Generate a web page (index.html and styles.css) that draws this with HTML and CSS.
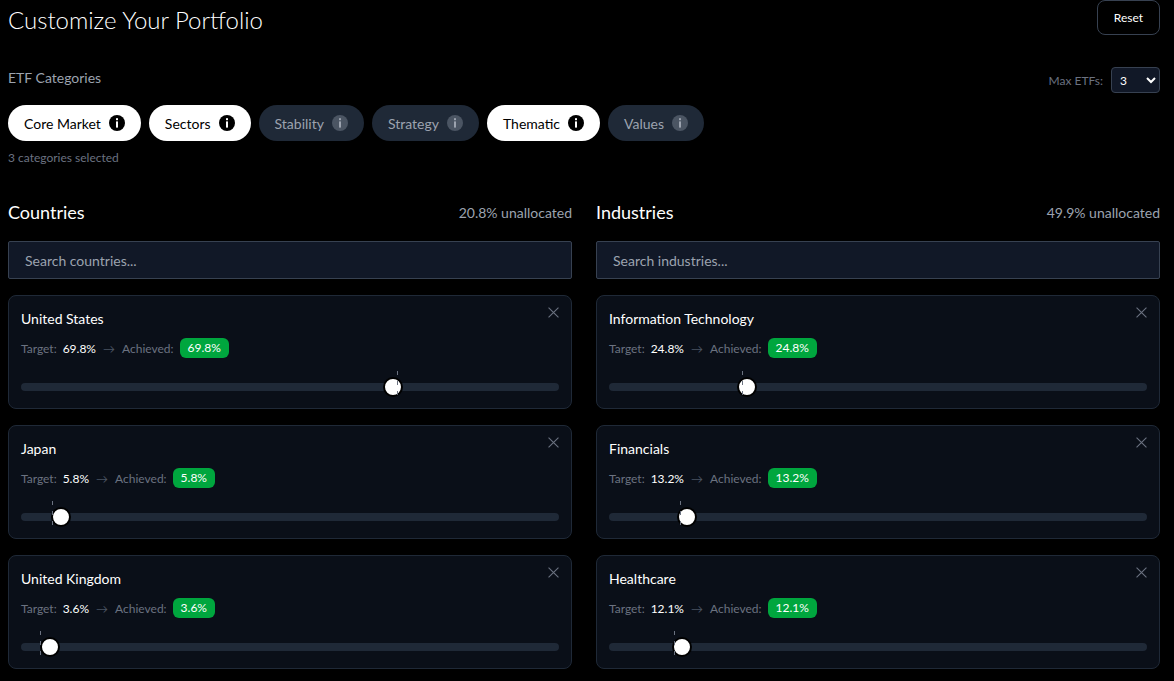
FILE: index.html
```html
<!DOCTYPE html>
<html lang="en">

<head>
    <title>Customize Your Portfolio</title>
    <link rel="stylesheet" href="styles.css">
</head>

<body>

    <div class="page">
        <!-- Header -->
        <div class="page-header">
            <h1>Customize Your Portfolio</h1>
            <button class="btn-reset">Reset</button>
        </div>

        <!-- Categories -->
        <div class="categories-top">
            <span class="section-label">ETF Categories</span>
            <div class="max-etfs">
                <label for="maxEtfs">Max ETFs:</label>
                <select id="maxEtfs">
                    <option>1</option>
                    <option>2</option>
                    <option selected>3</option>
                    <option>4</option>
                    <option>5</option>
                </select>
            </div>
        </div>

        <div class="pills">
            <button class="pill active">Core Market <svg class="info" viewBox="0 0 16 16"><circle cx="8" cy="8" r="8"/><rect class="info-mark" x="7" y="3.2" width="2" height="2"/><rect class="info-mark" x="7" y="6.4" width="2" height="6.2"/></svg></button>
            <button class="pill active">Sectors <svg class="info" viewBox="0 0 16 16"><circle cx="8" cy="8" r="8"/><rect class="info-mark" x="7" y="3.2" width="2" height="2"/><rect class="info-mark" x="7" y="6.4" width="2" height="6.2"/></svg></button>
            <button class="pill">Stability <svg class="info" viewBox="0 0 16 16"><circle cx="8" cy="8" r="8"/><rect class="info-mark" x="7" y="3.2" width="2" height="2"/><rect class="info-mark" x="7" y="6.4" width="2" height="6.2"/></svg></button>
            <button class="pill">Strategy <svg class="info" viewBox="0 0 16 16"><circle cx="8" cy="8" r="8"/><rect class="info-mark" x="7" y="3.2" width="2" height="2"/><rect class="info-mark" x="7" y="6.4" width="2" height="6.2"/></svg></button>
            <button class="pill active">Thematic <svg class="info" viewBox="0 0 16 16"><circle cx="8" cy="8" r="8"/><rect class="info-mark" x="7" y="3.2" width="2" height="2"/><rect class="info-mark" x="7" y="6.4" width="2" height="6.2"/></svg></button>
            <button class="pill">Values <svg class="info" viewBox="0 0 16 16"><circle cx="8" cy="8" r="8"/><rect class="info-mark" x="7" y="3.2" width="2" height="2"/><rect class="info-mark" x="7" y="6.4" width="2" height="6.2"/></svg></button>
        </div>
        <p class="selected-count">3 categories selected</p>

        <!-- Allocation columns -->
        <div class="columns">
            <div class="column">
                <div class="column-header">
                    <h2>Countries</h2>
                    <span class="unallocated">20.8% unallocated</span>
                </div>
                <input class="search" type="text" placeholder="Search countries...">

                <div class="card">
                    <button class="remove"><svg viewBox="0 0 10 10"><path d="M0.5 0.5L9.5 9.5M9.5 0.5L0.5 9.5"/></svg></button>
                    <h3>United States</h3>
                    <div class="stats">
                        <span>Target:</span><b>69.8%</b><i>→</i><span>Achieved:</span><em>69.8%</em>
                    </div>
                    <div class="slider">
                        <input type="range" min="0" max="100" step="0.1" value="69.8">
                        <div class="marker" style="left: 69.8%"></div>
                    </div>
                </div>

                <div class="card">
                    <button class="remove"><svg viewBox="0 0 10 10"><path d="M0.5 0.5L9.5 9.5M9.5 0.5L0.5 9.5"/></svg></button>
                    <h3>Japan</h3>
                    <div class="stats">
                        <span>Target:</span><b>5.8%</b><i>→</i><span>Achieved:</span><em>5.8%</em>
                    </div>
                    <div class="slider">
                        <input type="range" min="0" max="100" step="0.1" value="5.8">
                        <div class="marker" style="left: 5.8%"></div>
                    </div>
                </div>

                <div class="card">
                    <button class="remove"><svg viewBox="0 0 10 10"><path d="M0.5 0.5L9.5 9.5M9.5 0.5L0.5 9.5"/></svg></button>
                    <h3>United Kingdom</h3>
                    <div class="stats">
                        <span>Target:</span><b>3.6%</b><i>→</i><span>Achieved:</span><em>3.6%</em>
                    </div>
                    <div class="slider">
                        <input type="range" min="0" max="100" step="0.1" value="3.6">
                        <div class="marker" style="left: 3.6%"></div>
                    </div>
                </div>
            </div>

            <div class="column">
                <div class="column-header">
                    <h2>Industries</h2>
                    <span class="unallocated">49.9% unallocated</span>
                </div>
                <input class="search" type="text" placeholder="Search industries...">

                <div class="card">
                    <button class="remove"><svg viewBox="0 0 10 10"><path d="M0.5 0.5L9.5 9.5M9.5 0.5L0.5 9.5"/></svg></button>
                    <h3>Information Technology</h3>
                    <div class="stats">
                        <span>Target:</span><b>24.8%</b><i>→</i><span>Achieved:</span><em>24.8%</em>
                    </div>
                    <div class="slider">
                        <input type="range" min="0" max="100" step="0.1" value="24.8">
                        <div class="marker" style="left: 24.8%"></div>
                    </div>
                </div>

                <div class="card">
                    <button class="remove"><svg viewBox="0 0 10 10"><path d="M0.5 0.5L9.5 9.5M9.5 0.5L0.5 9.5"/></svg></button>
                    <h3>Financials</h3>
                    <div class="stats">
                        <span>Target:</span><b>13.2%</b><i>→</i><span>Achieved:</span><em>13.2%</em>
                    </div>
                    <div class="slider">
                        <input type="range" min="0" max="100" step="0.1" value="13.2">
                        <div class="marker" style="left: 13.2%"></div>
                    </div>
                </div>

                <div class="card">
                    <button class="remove"><svg viewBox="0 0 10 10"><path d="M0.5 0.5L9.5 9.5M9.5 0.5L0.5 9.5"/></svg></button>
                    <h3>Healthcare</h3>
                    <div class="stats">
                        <span>Target:</span><b>12.1%</b><i>→</i><span>Achieved:</span><em>12.1%</em>
                    </div>
                    <div class="slider">
                        <input type="range" min="0" max="100" step="0.1" value="12.1">
                        <div class="marker" style="left: 12.1%"></div>
                    </div>
                </div>
            </div>
        </div>
    </div>

</body>

</html>
```

FILE: styles.css
```css
/* Base Reset */
* {
    box-sizing: border-box;
    margin: 0;
    padding: 0;
    font-family: 'Lato', 'Open Sans', sans-serif;
}

html {
    color-scheme: dark;
}

body {
    background-color: #000;
    color: #fff;
    overflow: hidden;
}

.page {
    padding: 0 14px 0 8px;
}

/* Header */
.page-header {
    display: flex;
    justify-content: space-between;
    align-items: flex-start;
    height: 67px;
}

.page-header h1 {
    font-size: 24px;
    font-weight: 300;
    line-height: 40px;
}

.btn-reset {
    width: 63px;
    height: 35px;
    background: #000;
    color: #fff;
    border: 1px solid #374151;
    border-radius: 8px;
    font-size: 12px;
}

/* Categories */
.categories-top {
    display: flex;
    justify-content: space-between;
    align-items: flex-start;
    height: 38px;
}

.section-label {
    font-size: 14px;
    line-height: 22px;
    color: #9ca3af;
}

.max-etfs {
    display: flex;
    align-items: center;
    gap: 8px;
    font-size: 12px;
    color: #6b7280;
}

.max-etfs select {
    width: 49px;
    height: 26px;
    padding-left: 4px;
    background-color: #111827;
    color: #fff;
    border: 1px solid #374151;
    border-radius: 4px;
    font-size: 12px;
}

.pills {
    display: flex;
    gap: 8px;
}

.pill {
    display: flex;
    align-items: center;
    gap: 8px;
    height: 36px;
    padding: 0 16px;
    border: none;
    border-radius: 18px;
    background-color: #1f2937;
    color: #9ca3af;
    font-size: 14px;
}

.pill.active {
    background-color: #fff;
    color: #000;
}

.info {
    width: 16px;
    height: 16px;
    fill: #4b5563;
}

.info-mark {
    fill: #9ca3af;
}

.active .info {
    fill: #000;
}

.active .info-mark {
    fill: #fff;
}

.selected-count {
    margin-top: 9px;
    font-size: 12px;
    line-height: 16px;
    color: #6b7280;
}

/* Columns */
.columns {
    display: grid;
    grid-template-columns: 1fr 1fr;
    gap: 24px;
    margin-top: 30px;
}

.column-header {
    display: flex;
    justify-content: space-between;
    align-items: center;
    height: 32px;
    margin-bottom: 13px;
}

.column-header h2 {
    font-size: 18px;
    font-weight: 400;
}

.unallocated {
    font-size: 14px;
    color: #9ca3af;
}

.search {
    display: block;
    width: 100%;
    height: 38px;
    padding: 0 16px;
    margin-bottom: 16px;
    background-color: #111827;
    border: 1px solid #374151;
    border-radius: 2px;
    color: #fff;
    font-size: 14px;
}

.search::placeholder {
    color: #9ca3af;
}

/* Allocation Card */
.card {
    position: relative;
    height: 114px;
    margin-bottom: 16px;
    padding: 12px;
    background-color: #0a0f18;
    border: 1px solid #1f2937;
    border-radius: 8px;
}

.card h3 {
    font-size: 14px;
    font-weight: 400;
    line-height: 22px;
}

.remove {
    position: absolute;
    top: 11px;
    right: 12px;
    width: 11px;
    height: 11px;
    background: none;
    border: none;
}

.remove svg {
    display: block;
    stroke: #6b7280;
    fill: none;
}

.stats {
    display: flex;
    align-items: center;
    height: 20px;
    margin-top: 8px;
    font-size: 12px;
    color: #6b7280;
}

.stats b {
    margin: 0 7px 0 6px;
    font-weight: 400;
    color: #fff;
}

.stats i {
    margin-right: 7px;
    font-style: normal;
    color: #4b5563;
}

.stats em {
    margin-left: 6px;
    padding: 0 8px;
    font-style: normal;
    line-height: 20px;
    color: #fff;
    background-color: #00a63e;
    border-radius: 6px;
}

/* Slider */
.slider {
    position: relative;
    margin-top: 19px;
    height: 20px;
}

.slider input[type="range"] {
    display: block;
    width: 100%;
    height: 20px;
    appearance: none;
    background: none;
}

.slider input[type="range"]::-webkit-slider-runnable-track {
    height: 8px;
    background-color: #1f2937;
    border-radius: 4px;
}

.slider input[type="range"]::-webkit-slider-thumb {
    appearance: none;
    width: 20px;
    height: 20px;
    margin-top: -6px;
    background-color: #fff;
    border: 2px solid #000;
    border-radius: 50%;
}

.marker {
    position: absolute;
    top: -6px;
    width: 1px;
    height: 25px;
    background: repeating-linear-gradient(to bottom, #6b7280 0, #6b7280 4px, transparent 4px, transparent 10px);
}
```
